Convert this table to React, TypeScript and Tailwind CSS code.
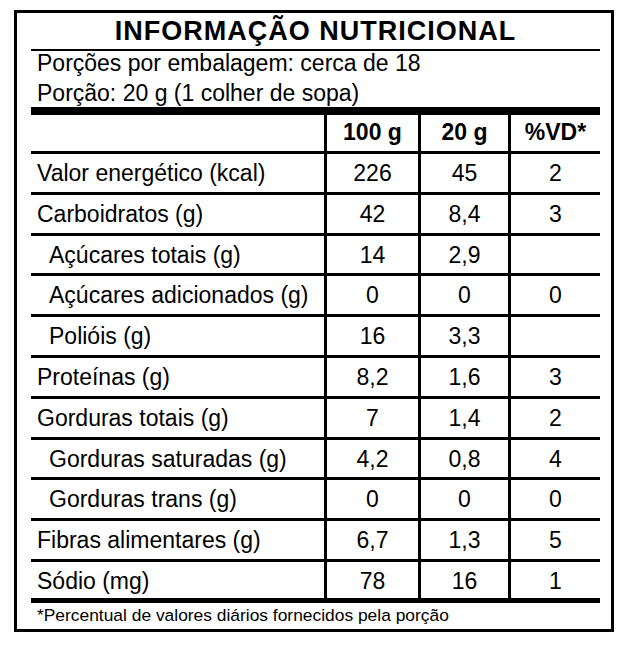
type Row = {
  label: string;
  per100: string;
  perPortion: string;
  vd: string;
  indent?: boolean;
};

const ROWS: Row[] = [
  { label: "Valor energético (kcal)", per100: "226", perPortion: "45", vd: "2" },
  { label: "Carboidratos (g)", per100: "42", perPortion: "8,4", vd: "3" },
  { label: "Açúcares totais (g)", per100: "14", perPortion: "2,9", vd: "", indent: true },
  { label: "Açúcares adicionados (g)", per100: "0", perPortion: "0", vd: "0", indent: true },
  { label: "Polióis (g)", per100: "16", perPortion: "3,3", vd: "", indent: true },
  { label: "Proteínas (g)", per100: "8,2", perPortion: "1,6", vd: "3" },
  { label: "Gorduras totais (g)", per100: "7", perPortion: "1,4", vd: "2" },
  { label: "Gorduras saturadas (g)", per100: "4,2", perPortion: "0,8", vd: "4", indent: true },
  { label: "Gorduras trans (g)", per100: "0", perPortion: "0", vd: "0", indent: true },
  { label: "Fibras alimentares (g)", per100: "6,7", perPortion: "1,3", vd: "5" },
  { label: "Sódio (mg)", per100: "78", perPortion: "16", vd: "1" },
];

const GRID = "grid grid-cols-[296px_94px_90px_89px]";

export default function App() {
  return (
    <div className="min-h-[645px] bg-white pl-[14px] pt-[10px] text-black [font-family:'Liberation_Sans',Arial,sans-serif]">
      <div className="h-[622px] w-[600px] overflow-hidden border-[3px] border-black pl-[14px] pr-[11px]">
        {/* TITLE */}
        <h1 className="h-[38px] border-b-2 border-black text-center text-[27px] font-bold leading-[36px] tracking-[1px]">
          INFORMAÇÃO NUTRICIONAL
        </h1>

        {/* PORTIONS */}
        <div className="-mt-[3px] h-[59px] pl-[6px] text-[23px] leading-[30px]">
          <p>Porções por embalagem: cerca de 18</p>
          <p>Porção: 20 g (1 colher de sopa)</p>
        </div>
        <div className="h-[8px] bg-black" />

        {/* HEADER */}
        <div className={`${GRID} h-[39px] border-b-[3px] border-black text-[23px] font-bold leading-[33px]`}>
          <div className="border-r-[3px] border-black" />
          <div className="border-r-[3px] border-black pt-[1px] text-center">100 g</div>
          <div className="border-r-[3px] border-black pt-[1px] text-center">20 g</div>
          <div className="pt-[1px] text-center">%VD*</div>
        </div>

        {/* ROWS */}
        {ROWS.map((r, i) => {
          const last = i === ROWS.length - 1;
          return (
            <div
              key={r.label}
              className={`${GRID} text-[23px] ${
                last ? "h-[36px] leading-[34px]" : "h-[40.8px] border-b-[3px] border-black leading-[35.8px]"
              }`}
            >
              <div className={`border-r-[3px] border-black pt-[2px] ${r.indent ? "pl-[18px]" : "pl-[6px]"}`}>
                {r.label}
              </div>
              <div className="border-r-[3px] border-black pt-[2px] text-center">{r.per100}</div>
              <div className="border-r-[3px] border-black pt-[2px] text-center">{r.perPortion}</div>
              <div className="pt-[2px] text-center">{r.vd}</div>
            </div>
          );
        })}
        <div className="h-[5px] bg-black" />

        {/* FOOTNOTE */}
        <p className="pl-[6px] pt-[3px] text-[17.4px] leading-[18px]">
          *Percentual de valores diários fornecidos pela porção
        </p>
      </div>
    </div>
  );
}
